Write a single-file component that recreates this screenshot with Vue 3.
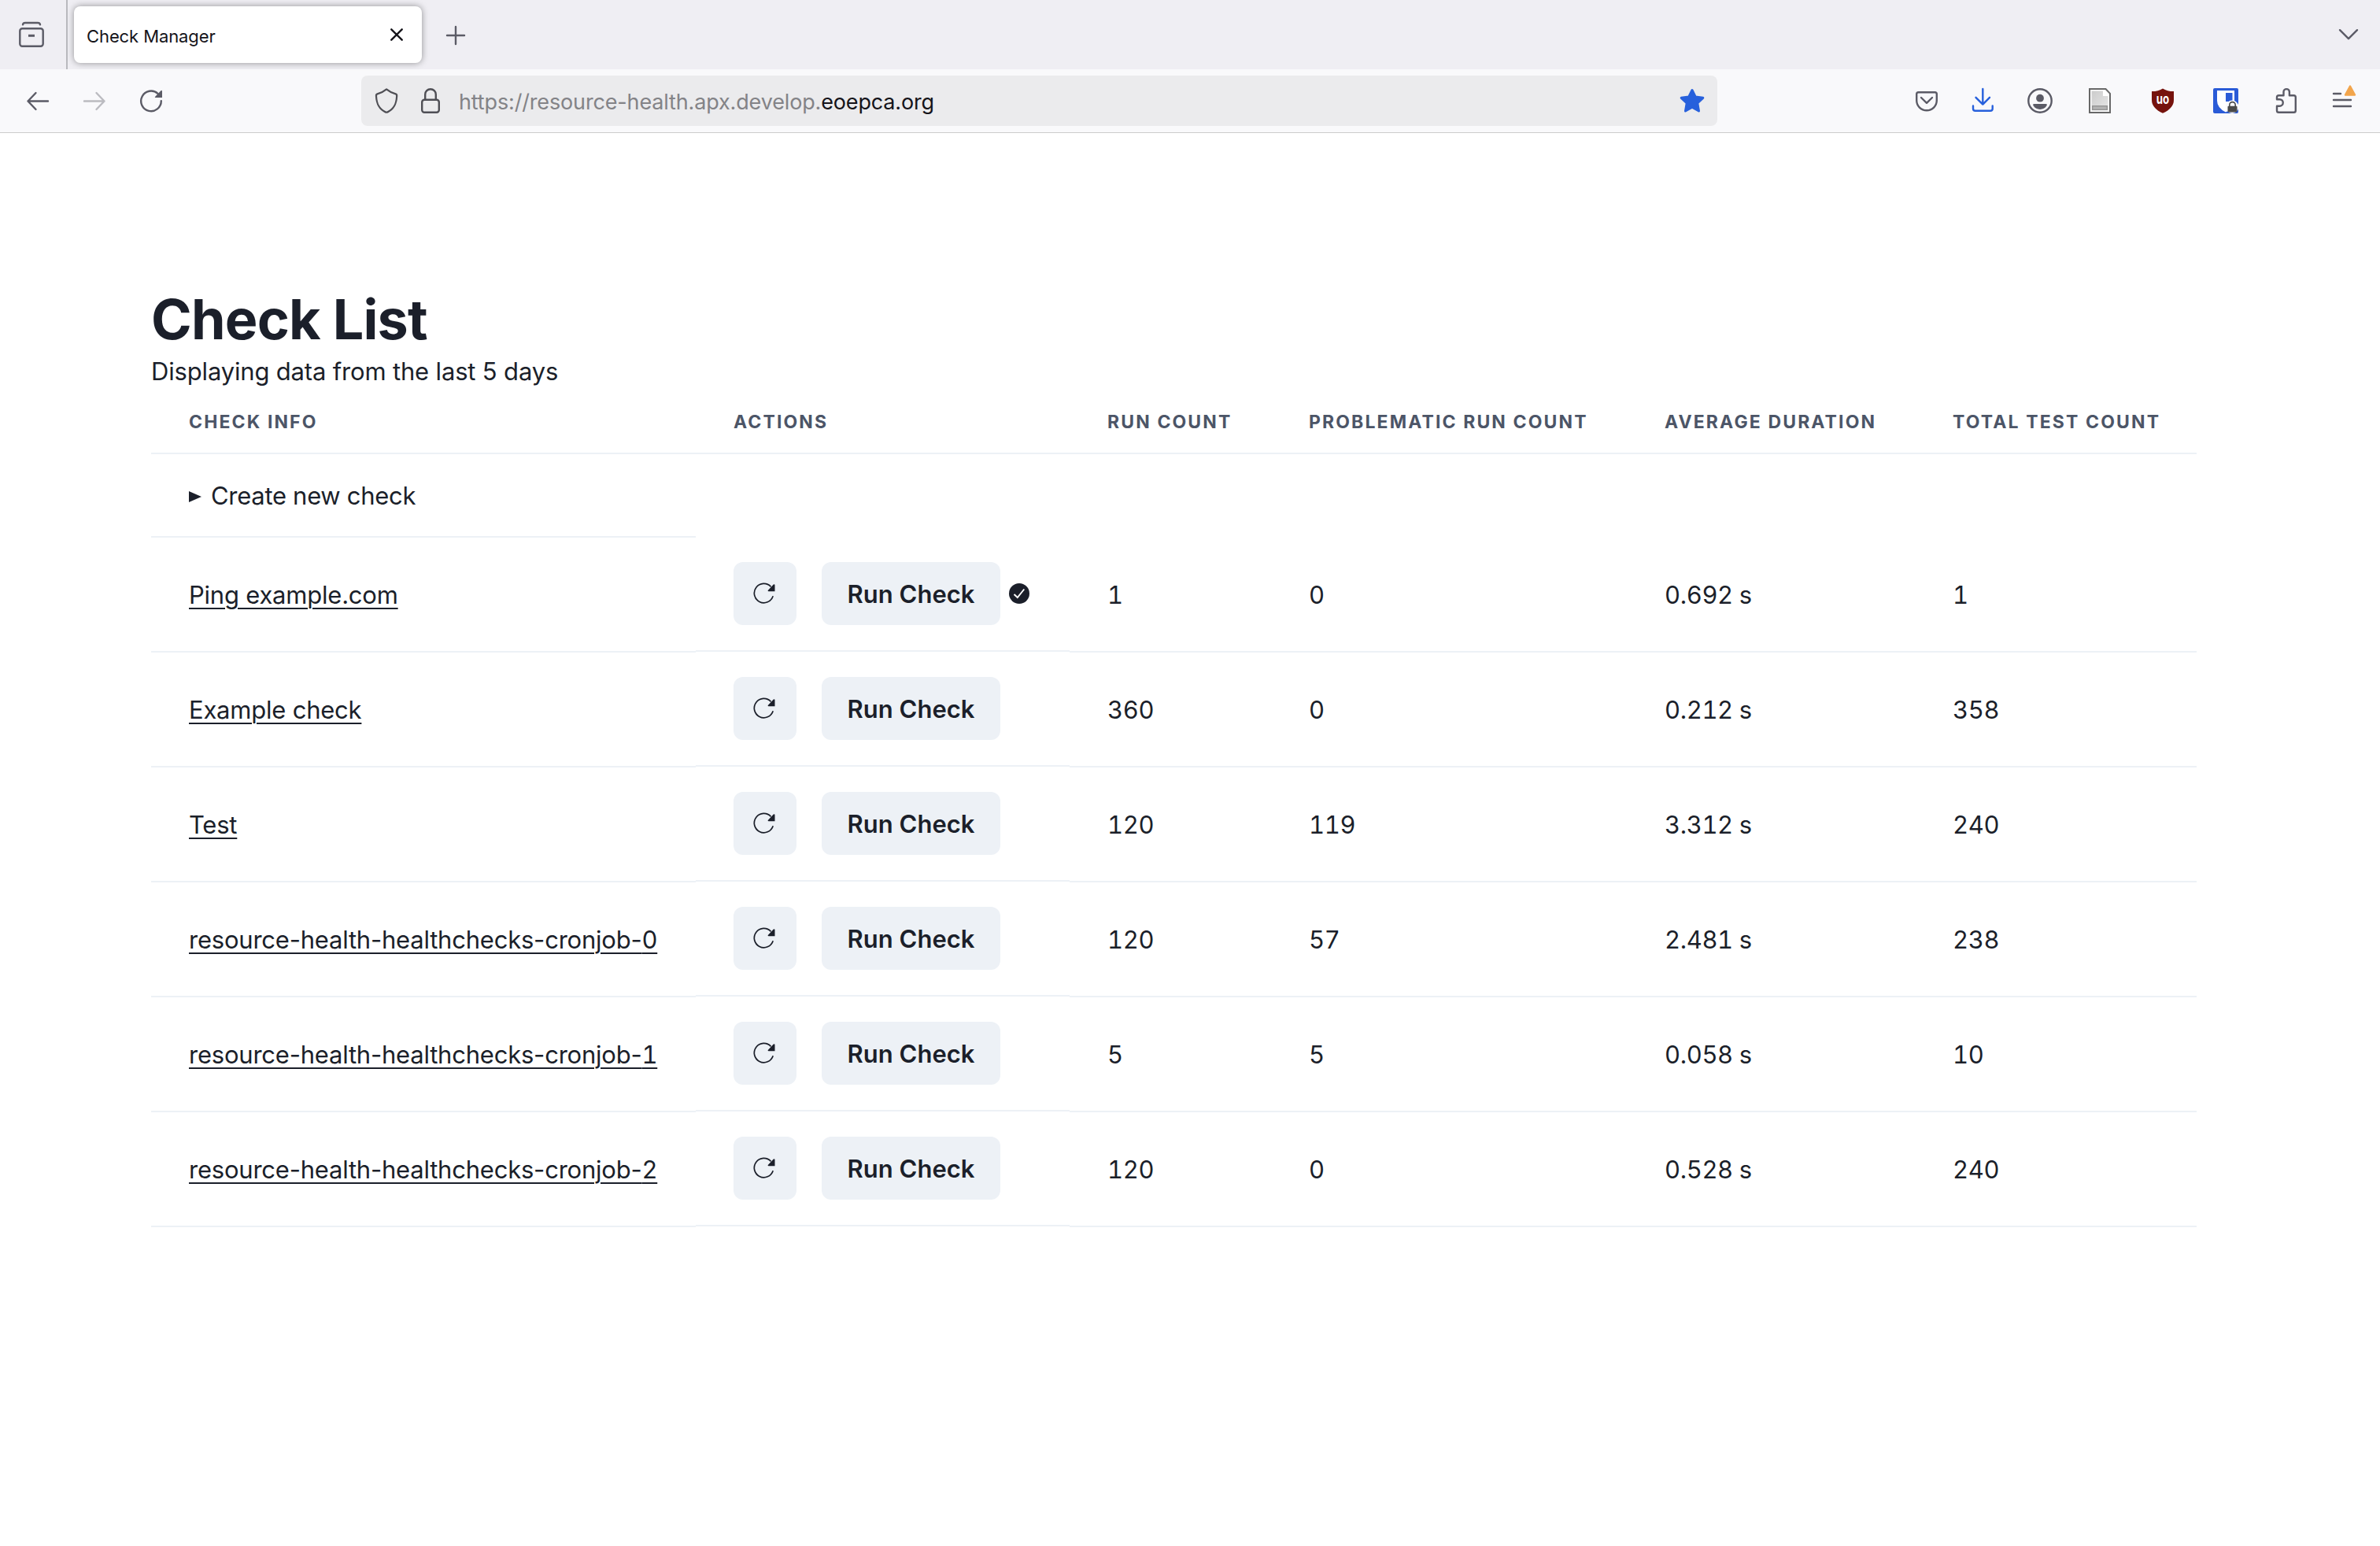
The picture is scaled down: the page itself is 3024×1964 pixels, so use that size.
<template>
    <div class="window">
        <header class="tabs">
            <div class="archive">
                <svg class="icon" viewBox="0 0 32 32" width="32" height="32">
                    <path d="M5 3.3Q5.500 1 8 1H24Q26.500 1 27 3.3" />
                    <rect x="1.3" y="8.3" width="29.4" height="22.4" rx="3" />
                    <path d="M12 17.300H20" stroke-width="3" stroke-linecap="butt" />
                </svg>
            </div>
            <div class="tab">
                <span class="tab-title">Check Manager</span>
                <svg class="close" viewBox="0 0 16 16" width="16" height="16">
                    <path d="M1.3 1.3L14.7 14.7M14.7 1.3L1.3 14.7" />
                </svg>
            </div>
            <svg class="icon plus" viewBox="0 0 24 24" width="24" height="24">
                <path d="M12 1V23M1 12H23" />
            </svg>
            <svg class="icon chevron" viewBox="0 0 24 14" width="24" height="14">
                <path d="M1 1.2L12 12.2L23 1.2" />
            </svg>
        </header>

        <nav class="toolbar">
            <svg class="icon" viewBox="0 0 32 32" width="32" height="32">
                <path d="M29 16.5H3.500M13.500 6L3.500 16.500L13.500 27" />
            </svg>
            <svg class="icon disabled" viewBox="0 0 32 32" width="32" height="32">
                <path d="M3 16.500H28.500M18.500 6L28.500 16.500L18.500 27" />
            </svg>
            <svg class="icon" viewBox="0 0 32 32" width="32" height="32">
                <path d="M28.8 16.3A12.8 12.8 0 1 1 24.5 6.8" />
                <path class="solid" d="M30 3.5V12H21.5Q20.2 12 21 11L28.6 3Q29.6 2.2 30 3.5Z" />
            </svg>
            <div class="urlbar">
                <svg class="icon dark" viewBox="0 0 32 32" width="32" height="32">
                    <path d="M16 1.4Q21.500 5.600 28.500 7.400Q30.300 7.900 30.100 10C29.500 20 26.500 26.500 17.500 30.300Q16 31 14.500 30.300C5.500 26.500 2.500 20 1.900 10Q1.700 7.900 3.500 7.400Q10.500 5.600 16 1.400Z" transform="translate(1.200 0) scale(.93 1)" />
                </svg>
                <svg class="icon dark lock" viewBox="0 0 24 32" width="24" height="32">
                    <rect x="1.2" y="14.8" width="21.6" height="16" rx="3" />
                    <path d="M5.2 14.5V8A6.8 6.8 0 0 1 18.800 8V14.5" />
                </svg>
                <span class="url">https://resource-health.apx.develop.<b>eoepca.org</b></span>
                <svg class="star" viewBox="0 0 32 32" width="32" height="32">
                    <path d="M16 2.5L20.200 11L29.800 12.300L22.800 19L24.500 29L16 24.300L7.500 29L9.200 19L2.200 12.300L11.800 11Z" />
                </svg>
            </div>
            <div class="extensions">
                <svg class="icon" viewBox="0 0 32 32" width="32" height="32">
                    <path d="M5.500 5.200H26.500Q28.800 5.200 28.800 7.500V15.500A12.800 12.800 0 0 1 3.200 15.500V7.500Q3.200 5.200 5.500 5.200Z" />
                    <path d="M9 12L16 18.800L23 12" />
                </svg>
                <svg class="icon blue" viewBox="0 0 32 32" width="32" height="32">
                    <path d="M15.300 1V20.500M6.500 11.800L15.300 20.600L24 11.800M3 22.500V26Q3 28.800 5.800 28.800H24.900Q27.700 28.800 27.700 26V22.500" />
                </svg>
                <svg class="icon" viewBox="0 0 32 32" width="32" height="32">
                    <circle cx="16" cy="16" r="14.7" />
                    <circle class="solid" cx="16" cy="12.7" r="4.9" />
                    <path class="solid" d="M8.500 20H23.500Q25.800 20.300 24.300 22.600Q21.500 26.900 16 26.900Q10.500 26.900 7.700 22.600Q6.200 20.300 8.500 20Z" />
                </svg>
                <svg class="page" viewBox="0 0 32 32" width="32" height="32">
                    <defs>
                        <linearGradient id="sheet" x1="0" y1="0" x2="1" y2="1">
                            <stop offset="0" stop-color="#cccccc" />
                            <stop offset="1" stop-color="#e6e6e6" />
                        </linearGradient>
                    </defs>
                    <path d="M3 1H23.500L29 6.800V31H3Z" fill="#fff" stroke="#686868" stroke-width="2" />
                    <path d="M5.500 3.500H20V10H26.500V28.500H5.500Z" fill="url(#sheet)" />
                    <path d="M22.500 3V8H27.500" fill="#fff" />
                    <rect x="6.7" y="22.7" width="18.6" height="4.6" fill="#b4b4b4" stroke="#949494" stroke-width="1.4" />
                </svg>
                <svg class="ublock" viewBox="0 0 32 32" width="32" height="32">
                    <path d="M16 .4Q21.500 4 30 4V15Q30 25.500 16 31.800Q2 25.500 2 15V4Q10.500 4 16 .4Z" fill="#76130d" />
                    <text x="7.800" y="19.600" textLength="16.400" lengthAdjust="spacingAndGlyphs">uo</text>
                </svg>
                <svg class="vault" viewBox="0 0 32 32" width="32" height="32">
                    <rect width="32" height="32" rx="2" fill="#2a5bd7" />
                    <path d="M5 3H27V16Q27 25 16 30.500Q5 25 5 16Z" fill="#fff" />
                    <path d="M16 6H24.500V17H16Z" fill="#2a5bd7" />
                    <circle cx="24.2" cy="23.7" r="8.2" fill="#fafafc" />
                    <rect x="18.5" y="22.8" width="12" height="7.600" rx="1" fill="#4a4a4a" />
                    <path d="M20.800 23V21.300A3.700 3.700 0 0 1 28.200 21.300V23" fill="none" stroke="#4a4a4a" stroke-width="1.6" />
                </svg>
                <svg class="icon puzzle" viewBox="0 0 32 32" width="32" height="32">
                    <path d="M5 14.200V11.500Q5 9.200 7.300 9.200H13.500V4.800A3.700 3.700 0 0 1 20.900 4.800V9.200H26.500Q28.800 9.200 28.800 11.500V28.500Q28.800 30.800 26.500 30.800H7.300Q5 30.800 5 28.500V22.700H8.500A4.250 4.250 0 0 0 8.500 14.200Z" />
                </svg>
                <svg class="icon" viewBox="0 0 32 32" width="32" height="32">
                    <path d="M5 7H14M5 15H27M5 23H27" />
                    <path class="alert" d="M26 -2.500L32 8.500H20Z" />
                </svg>
            </div>
        </nav>

        <main>
            <h1>Check List</h1>
            <p>Displaying data from the last 5 days</p>
            <div class="table">
                <div class="row head">
                    <div v-for="column in columns" :key="column" class="th">{{ column }}</div>
                </div>
                <div class="row create">
                    <div class="td"><i class="marker"></i>Create new check</div>
                </div>
                <div v-for="(check, index) in checks" :key="index" class="row">
                    <div class="td"><a>{{ check.name }}<span class="num">{{ check.job }}</span></a></div>
                    <div class="td actions">
                        <button class="refresh">
                            <svg viewBox="1 0 28 28" width="28" height="28">
                                <path d="M25.2 17.2A12.2 12.2 0 1 1 22.5 5.3" fill="none" stroke="currentColor" stroke-width="1.7" />
                                <path d="M27.5 3V11.2H19.5Q17.8 11.2 19 9.8L25.8 2.6Q27 1.5 27.5 3Z" fill="currentColor" />
                            </svg>
                        </button>
                        <button class="run">Run Check</button>
                        <svg v-if="check.done" class="done" viewBox="0 0 26 26" width="26" height="26">
                            <circle cx="13" cy="13" r="13" fill="currentColor" />
                            <path d="M6.5 14L10.8 18L19.3 7.5" fill="none" stroke="#fff" stroke-width="1.9" />
                        </svg>
                    </div>
                    <div class="td num">{{ check.runs }}</div>
                    <div class="td num">{{ check.problems }}</div>
                    <div class="td num">{{ check.duration }}</div>
                    <div class="td num">{{ check.tests }}</div>
                </div>
            </div>
        </main>
    </div>
</template>

<script setup>
    const columns = [
        'Check info',
        'Actions',
        'Run count',
        'Problematic run count',
        'Average duration',
        'Total test count',
    ];

    const checks = [
        { name: 'Ping example.com', runs: 1, problems: 0, duration: '0.692 s', tests: 1, done: true },
        { name: 'Example check', runs: 360, problems: 0, duration: '0.212 s', tests: 358 },
        { name: 'Test', runs: 120, problems: 119, duration: '3.312 s', tests: 240 },
        { name: 'resource-health-healthchecks-cronjob-', job: 0, runs: 120, problems: 57, duration: '2.481 s', tests: 238 },
        { name: 'resource-health-healthchecks-cronjob-', job: 1, runs: 5, problems: 5, duration: '0.058 s', tests: 10 },
        { name: 'resource-health-healthchecks-cronjob-', job: 2, runs: 120, problems: 0, duration: '0.528 s', tests: 240 },
    ];
</script>

<style>
body {
  margin: 0;
  background: #fff;
}
</style>

<style scoped>
.window {
  min-height: 1964px;
  font-family: Inter, "Liberation Sans", sans-serif;
  color: #1b1f2a;
}
svg {
  display: block;
  flex: none;
  overflow: visible;
}
.icon {
  fill: none;
  stroke: #5b5b66;
  stroke-width: 2.4;
  stroke-linecap: round;
  stroke-linejoin: round;
}
.icon .solid {
  fill: #5b5b66;
  stroke: none;
}
.icon .alert {
  fill: #f2a54c;
  stroke: #f2a54c;
}
.icon.dark {
  stroke: #4f4f55;
}
.icon.blue {
  stroke: #2760dc;
}
.icon.disabled {
  stroke: #bbbbc0;
}
.tabs {
  display: flex;
  align-items: center;
  height: 88px;
  background: #efeef3;
}
.archive {
  display: flex;
  align-items: center;
  width: 60px;
  height: 88px;
  padding-left: 24px;
  border-right: 2px solid #b9b9be;
}
.tab {
  display: flex;
  align-items: center;
  justify-content: space-between;
  box-sizing: border-box;
  width: 442px;
  height: 72px;
  margin-left: 8px;
  padding: 0 24px 0 16px;
  border-radius: 8px;
  background: #fff;
  box-shadow: 0 0 8px rgba(0, 0, 0, 0.4);
}
.tab-title {
  padding-top: 3px;
  font-size: 22px;
  letter-spacing: -0.1px;
  color: #15141a;
}
.close {
  fill: none;
  stroke: #15141a;
  stroke-width: 2.4;
  stroke-linecap: round;
}
.plus {
  margin: 2px 0 0 31px;
}
.chevron {
  margin: 0 28px 0 auto;
}
.toolbar {
  display: flex;
  align-items: center;
  gap: 40px;
  box-sizing: border-box;
  height: 81px;
  padding: 0 32px;
  border-bottom: 1px solid #cccccc;
  background: #f9f9fb;
}
.urlbar {
  display: flex;
  align-items: center;
  box-sizing: border-box;
  width: 1723px;
  height: 64px;
  margin-left: 211px;
  padding: 0 16px;
  border-radius: 8px;
  background: #ebebed;
}
.lock {
  margin-left: 28px;
}
.url {
  margin: 2px auto 0 24px;
  font-size: 27px;
  letter-spacing: -0.15px;
  color: #838387;
}
.url b {
  font-weight: 400;
  color: #15141a;
}
.star {
  fill: #2760dc;
  stroke: #2760dc;
  stroke-width: 3;
  stroke-linejoin: round;
}
.extensions {
  display: flex;
  gap: 40px;
  margin-left: auto;
}
.page,
.puzzle {
  margin-left: 4px;
}
.ublock,
.vault {
  margin-left: 8px;
}
.ublock text {
  font-size: 18px;
  font-weight: 700;
  fill: #fff;
}
main {
  padding: 194px 233px 0 192px;
}
h1,
p {
  margin: 0;
}
h1 {
  height: 85px;
  font-size: 70px;
  font-weight: 700;
  line-height: 86px;
  letter-spacing: -0.8px;
}
p {
  height: 47px;
  font-size: 31px;
  line-height: 48px;
  letter-spacing: -0.17px;
}
.row {
  display: grid;
  grid-template-columns: 692px 475px 256px 452px 366px 358px;
  height: 146px;
}
.row.head {
  height: 82px;
}
.row.create {
  height: 106px;
  letter-spacing: -0.3px;
}
.th,
.td {
  display: flex;
  align-items: center;
  padding: 0 48px;
  border-bottom: 2px solid #edf1f6;
  white-space: nowrap;
}
.th {
  padding-top: 1px;
  font-size: 23px;
  font-weight: 700;
  letter-spacing: 2.12px;
  text-transform: uppercase;
  color: #4c5567;
}
.td {
  font-size: 31px;
}
.td a {
  letter-spacing: -0.22px;
  text-decoration: underline;
  text-decoration-thickness: 2px;
  text-underline-offset: 5px;
}
.num {
  font-variant-numeric: tabular-nums;
  letter-spacing: -0.38px;
}
.marker {
  width: 0;
  margin: 3px 12px 0 0;
  border: solid transparent;
  border-width: 7.5px 0 7.5px 16px;
  border-left-color: #1b1f2a;
}
.actions {
  margin-bottom: 1px;
  padding-bottom: 1px;
}
button {
  display: flex;
  align-items: center;
  justify-content: center;
  height: 80px;
  padding: 0;
  border: 0;
  border-radius: 12px;
  background: #edf1f6;
  color: inherit;
  font: inherit;
}
.refresh {
  width: 80px;
  margin-right: 32px;
}
.run {
  width: 227px;
  font-weight: 600;
}
.done {
  margin-left: 11px;
}
</style>
